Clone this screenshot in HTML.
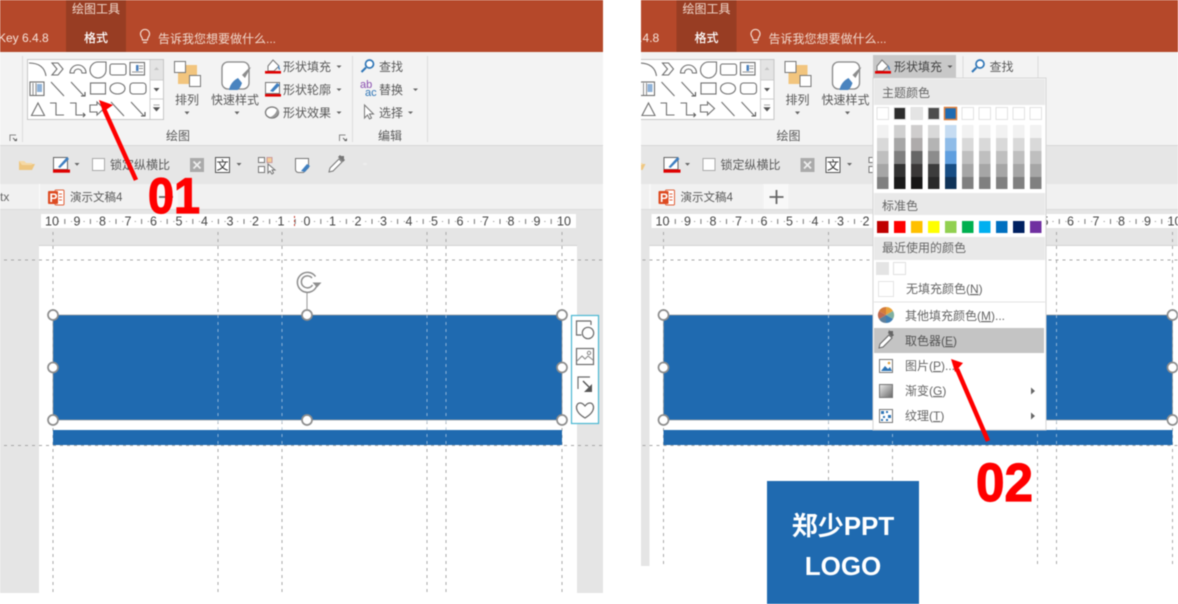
<!DOCTYPE html>
<html lang="zh">
<head>
<meta charset="utf-8">
<title>PPT</title>
<style>
html,body{margin:0;padding:0;background:#fff;width:1178px;height:604px;overflow:hidden}
svg{display:block;filter:blur(.45px)}
text{font-family:"Liberation Sans","Noto Sans CJK SC",sans-serif;font-size:12px;fill:#5a5a5a}
.c{text-anchor:middle}
.w{fill:#fff}
.p{fill:#f0d8cc}
.r{fill:#444;text-anchor:middle;font-size:12.5px}
.big{font-weight:bold;fill:#f00;stroke:#f00;stroke-width:1.2px}
.m{fill:#666;font-size:12px}
.h{fill:#666;font-size:12px}
</style>
</head>
<body>
<svg xmlns="http://www.w3.org/2000/svg" width="1178" height="604" viewBox="0 0 1178 604">
<defs>
<clipPath id="cl"><rect x="0" y="0" width="603" height="604"/></clipPath>
<clipPath id="cr"><rect x="641" y="0" width="537" height="604"/></clipPath>
<pattern id="tick" patternUnits="userSpaceOnUse" x="52" y="214" width="25.6" height="14">
<rect x="12.3" y="5" width="1" height="5" fill="#777"/>
<rect x="6" y="7" width="1" height="1" fill="#888"/>
<rect x="19" y="7" width="1" height="1" fill="#888"/>
</pattern>
<g id="chrome">
<rect x="-10" y="0" width="613" height="593" fill="#e5e5e5"/>
<rect x="-10" y="0" width="613" height="52" fill="#b5482a"/>
<rect x="66" y="0" width="60" height="52" fill="#983d23"/>
<path d="M141 36a4.500 4.500 0 1 1 8 0c-1 1.500-1.500 2-1.500 4h-5c0-2-.5-2.500-1.500-4zM143 42.500h4" fill="none" stroke="#f3dcd2" stroke-width="1.200"/>
<rect x="-10" y="52" width="613" height="94" fill="#f3f3f3"/>
<rect x="-10" y="145" width="613" height="1.500" fill="#d8d8d8"/>
<rect x="22" y="56" width="1" height="86" fill="#dcdcdc"/>
<rect x="352" y="56" width="1" height="86" fill="#dcdcdc"/>
<rect x="427" y="56" width="1" height="86" fill="#dcdcdc"/>
<rect x="-10" y="146" width="613" height="38" fill="#e6e6e6"/>
<rect x="-10" y="184" width="613" height="25" fill="#f1f1f1"/>
<rect x="-10" y="209" width="613" height="1" fill="#dcdcdc"/>
<rect x="39" y="184" width="1" height="25" fill="#fbfbfb"/>
<rect x="153" y="184" width="25" height="25" fill="#f8f8f8"/>
<path d="M166 190v14M159 197h14" stroke="#666" stroke-width="1.800"/>
<!-- gallery -->
<rect x="27.500" y="59.500" width="136" height="60" fill="#fff" stroke="#c6c6c6"/>
<rect x="150" y="60" width="13" height="20" fill="#e4e4e4"/>
<path d="M150 60v59M150 80h13M150 99h13" stroke="#cfcfcf" fill="none"/>
<path d="M154 70l2.500-3 2.500 3z" fill="#c4c4c4"/>
<path d="M153.500 88h6l-3 3.500z" fill="#555"/>
<path d="M153.500 105h6M153.500 107.500h6l-3 3.500z" fill="#555" stroke="#555" stroke-width=".6"/>
<g fill="none" stroke="#707070" stroke-width="1.100">
<path d="M29 63Q44 63 46 76"/>
<path d="M52 63h6l5 6-5 6h-6l5-6z"/>
<path d="M70 73a8 8 0 0 1 16 0h-4a4 4 0 0 0-8 0z"/>
<path d="M106 62v8a8 8 0 1 1-8-8z"/>
<rect x="110" y="64" width="16" height="11" rx="2"/>
<rect x="130" y="62.500" width="14.500" height="12.500"/>
<path d="M139 66h4M139 68.500h4M132 72h11" stroke-width=".8"/>
<rect x="30" y="82" width="14" height="13.500"/>
<path d="M33 83v12M36 83v12" stroke-width=".8"/>
<path d="M51 82l13 14"/>
<path d="M71 82l13 14"/><path d="M81 96h4v-4" stroke="#555"/>
<rect x="90.500" y="83" width="15" height="11"/>
<ellipse cx="117.500" cy="88.500" rx="7.500" ry="5.500"/>
<rect x="130" y="83" width="16" height="11" rx="3"/>
<path d="M38 103l6.500 12.500h-13z"/>
<path d="M50 103h6v12h8"/>
<path d="M70 103h6v12h8"/><path d="M83 113l2 2-2 2" stroke="#555"/>
<path d="M90 105h7v-3l7 6.500-7 6.500v-3h-7z"/>
<path d="M111 102l13 14"/>
<path d="M131 102l13 14"/><path d="M141 116h4v-4" stroke="#555"/>
</g>
<rect x="136" y="65" width="2.500" height="6" fill="#4a80bd"/>
<rect x="37" y="84" width="5" height="8" fill="#8fb2d8"/>
<!-- arrange -->
<rect x="178" y="65" width="19" height="19" fill="#f2c57e"/>
<rect x="174.500" y="61.500" width="11" height="11" fill="#fff" stroke="#777"/>
<rect x="189.500" y="75.500" width="11" height="11" fill="#fff" stroke="#777"/>
<path d="M184.500 111.500h5l-2.500 3z" fill="#666"/>
<!-- quick style -->
<rect x="222" y="62" width="27" height="27" rx="6" fill="#fff" stroke="#888" stroke-width="1.300"/>
<path d="M248 69l3-2-6 11-3-3z" fill="#8c8c8c"/>
<path d="M229 90c1-6 5-10 9-12l4 5c-1 3-3 7-5 7z" fill="#4a84bf"/>
<path d="M234.500 111.500h5l-2.500 3z" fill="#666"/>
<!-- fill/outline/effect -->
<path d="M268 66l5-6 6 6-5 5-6 0z" fill="#fff" stroke="#777"/>
<path d="M278 65c2 2 2 4 2 5-2 0-2-3-2-5z" fill="#4a84bf"/>
<rect x="265" y="71" width="16" height="2.600" fill="#e00000"/>
<rect x="265.500" y="82.500" width="14" height="11" fill="#fff" stroke="#777"/>
<path d="M270 91l7-8 3 2-7 7z" fill="#3f7fc0"/>
<rect x="265" y="94" width="16" height="2.600" fill="#e00000"/>
<ellipse cx="272" cy="112.500" rx="6.500" ry="5.500" fill="#fff" stroke="#777" stroke-width="1.300"/>
<path d="M270 117c4 1 8-1 9-6l-2-3c0 4-3 8-7 9z" fill="#999"/>
<path d="M336.500 65.500h5l-2.500 2.500zM336.500 88.500h5l-2.500 2.500zM336.500 111.500h5l-2.500 2.500z" fill="#666"/>
<!-- launchers -->
<path d="M10 141v-6h6M339.500 141v-6h6" fill="none" stroke="#888"/>
<path d="M13 138l3 3M343 138l3 3" stroke="#666"/><path d="M14 141h3v-3zM344 141h3v-3z" fill="#666"/>
<!-- find / replace / select -->
<circle cx="369.500" cy="64" r="4" fill="#fff" stroke="#2e75b6" stroke-width="1.700"/>
<path d="M366 67.500l-4.500 4.500" stroke="#2e75b6" stroke-width="2"/>
<path d="M413 88.500h5l-2.500 2.500zM408 111.500h5l-2.500 2.500z" fill="#666"/>
<path d="M364.500 105v13l3-3 2 4 2-1-2-4h4z" fill="#fff" stroke="#777"/>
<!-- toolbar -->
<path d="M19 170v-9h5l2 2h6v1h3l-3 6z" fill="#eec680"/>
<path d="M19 161h5l2 2h6v2H22z" fill="#f5d9a5"/>
<rect x="53.500" y="157.500" width="14" height="12" fill="#fff" stroke="#666"/>
<path d="M58 167l9-10 2 2-9 9z" fill="#3f7fc0"/>
<rect x="53" y="169.500" width="17" height="3.200" fill="#e00000"/>
<path d="M74.500 163h5l-2.500 2.800z" fill="#666"/>
<rect x="92.500" y="158.500" width="12" height="12" fill="#fff" stroke="#aaa"/>
<rect x="190" y="158" width="14" height="14" fill="#aaa"/>
<path d="M193.500 161.500l7 7M200.500 161.500l-7 7" stroke="#eee" stroke-width="1.800"/>
<rect x="215.500" y="157.500" width="14" height="15" fill="#fff" stroke="#555"/>
<path d="M236.500 163h5l-2.500 2.800z" fill="#666"/>
<rect x="258.500" y="157.500" width="6" height="5" fill="#fff" stroke="#777"/>
<rect x="258.500" y="166.500" width="6" height="6" fill="#fff" stroke="#777"/>
<rect x="267" y="157.500" width="5" height="5" fill="#f4cf98" stroke="#c99"/>
<path d="M268 164v9l2-2 2 3 1.500-1-1.500-3h3z" fill="#fff" stroke="#777"/>
<path d="M295.500 158.500h13v9l-5 5h-5a3 3 0 0 1-3-3z" fill="#fff" stroke="#777"/>
<path d="M301 171l6-7 3 2-5 6z" fill="#3f7fc0"/>
<path d="M329 172l1-4 9-9 3 3-9 9z" fill="#fff" stroke="#777"/>
<path d="M338 157l5 5 2-2-1-1 0-3-3 0-1-1z" fill="#777"/>
<rect x="363" y="163" width="4" height="2" fill="#ededed"/>
<!-- tab icon -->
<rect x="55" y="190" width="9" height="15" rx="1" fill="#fff" stroke="#e0603a"/>
<path d="M59 194h3M59 197h3M59 200h3" stroke="#e0603a"/>
<rect x="48" y="191" width="10" height="13" rx="1" fill="#dd4b22"/>
<!-- ruler -->
<rect x="41" y="214" width="535" height="14" fill="#fff"/>
<rect x="52" y="214" width="512" height="14" fill="url(#tick)"/>
<!-- slide -->
<rect x="39" y="245" width="538" height="348" fill="#fff"/>
<rect x="39" y="245" width="538" height="1" fill="#d2d2d2"/>
<g fill="none" stroke="#a8a8a8" stroke-width="1" stroke-dasharray="3 4">
<path d="M-10 260H603M-10 445.500H603"/>
<path d="M53 232V593M218 232V593M282 232V593M427 232V593M446 232V593M562 232V593"/>
</g>
<rect x="53" y="315" width="509" height="105" fill="#1f6ab0"/>
<rect x="53" y="430" width="509" height="15" fill="#1f6ab0"/>
<g fill="none" stroke="#bcd3e8" stroke-width="1" stroke-dasharray="3 4" opacity=".7">
<path d="M218 315V445M282 315V445M427 315V445M446 315V445"/>
</g>
<path d="M53 315H562M53 420H562M53 315V420M562 315V420" fill="none" stroke="#9a9a9a" stroke-width="1" opacity=".7"/>
</g>
<g id="handles" fill="#fff" stroke="#8d8d8d" stroke-width="1.700">
<circle cx="53" cy="315" r="5"/><circle cx="53" cy="367.500" r="5"/><circle cx="53" cy="420" r="5"/>
<circle cx="562" cy="315" r="5"/><circle cx="562" cy="367.500" r="5"/><circle cx="562" cy="420" r="5"/>
<circle cx="307" cy="315" r="5"/><circle cx="307" cy="420" r="5"/>
</g>
</defs>

<!-- LEFT PANEL -->
<g clip-path="url(#cl)">
<use href="#chrome"/>
<use href="#handles"/>
<text x="72" y="13" class="p" style="font-size:12px">绘图工具</text>
<text x="96" y="42" class="w c" style="font-weight:500">格式</text>
<text x="-2" y="42" class="w" style="font-size:12px;fill:#f6e3da">Key 6.4.8</text>
<text x="158" y="43" class="p" style="font-size:12px">告诉我您想要做什么...</text>
<text x="187" y="104" class="c">排列</text>
<text x="235" y="104" class="c">快速样式</text>
<text x="283" y="71">形状填充</text>
<text x="283" y="94">形状轮廓</text>
<text x="283" y="117">形状效果</text>
<text x="379" y="71">查找</text>
<text x="379" y="94">替换</text>
<text x="379" y="117">选择</text>
<text x="360" y="88" style="font-size:11px;fill:#8a4fb0">ab</text>
<text x="365" y="96" style="font-size:11px;fill:#2e75b6">ac</text>
<text x="178" y="140" class="c">绘图</text>
<text x="390" y="140" class="c">编辑</text>
<text x="110" y="169" style="font-size:12px">锁定纵横比</text>
<text x="222.500" y="169.500" class="c" style="fill:#333;font-size:12px">文</text>
<text x="0" y="201" style="fill:#666">tx</text>
<text x="49.500" y="202" style="font-size:12px;font-weight:bold;fill:#fff">P</text>
<text x="70" y="201" style="font-size:11.500px">演示文稿4</text>
<text x="52" y="225.500" class="r">10</text><text x="77" y="225.500" class="r">9</text><text x="102.500" y="225.500" class="r">8</text><text x="128" y="225.500" class="r">7</text><text x="153.500" y="225.500" class="r">6</text><text x="179" y="225.500" class="r">5</text><text x="204.500" y="225.500" class="r">4</text><text x="230" y="225.500" class="r">3</text><text x="255.500" y="225.500" class="r">2</text><text x="281" y="225.500" class="r">1</text><text x="307" y="225.500" class="r">0</text><text x="332.500" y="225.500" class="r">1</text><text x="358" y="225.500" class="r">2</text><text x="383.500" y="225.500" class="r">3</text><text x="409" y="225.500" class="r">4</text><text x="434.500" y="225.500" class="r">5</text><text x="460" y="225.500" class="r">6</text><text x="485.500" y="225.500" class="r">7</text><text x="511" y="225.500" class="r">8</text><text x="537" y="225.500" class="r">9</text><text x="564" y="225.500" class="r">10</text>
<path d="M294.500 216V228" stroke="#c0392b" stroke-dasharray="2 2"/>
<!-- rotate handle -->
<path d="M307 292V311" stroke="#999" stroke-width="1"/>
<path d="M315.500 276.500a10 10 0 1 0 1 10" fill="none" stroke="#8d8d8d" stroke-width="1.500"/>
<path d="M312 278a6 6 0 1 0 .5 7" fill="none" stroke="#8d8d8d" stroke-width="1.500"/>
<path d="M312.500 282.500h9l-4.500 5z" fill="#8d8d8d"/>
<!-- float toolbar -->
<rect x="571.500" y="315.500" width="27" height="108" fill="#fff" stroke="#4ab7d2" stroke-width="1.200"/>
<path d="M591 321h-14.500v14h5" fill="none" stroke="#6b6b6b" stroke-width="1.200"/>
<path d="M591 321v4" stroke="#6b6b6b" stroke-width="1.200"/>
<circle cx="588" cy="333" r="5.700" fill="#fff" stroke="#6b6b6b" stroke-width="1.200"/>
<rect x="576.500" y="348.500" width="17" height="16" fill="#fff" stroke="#6b6b6b" stroke-width="1.200"/>
<path d="M577 361l5-5 3 3 3-3 5 4" fill="none" stroke="#888"/>
<circle cx="589" cy="353" r="1.700" fill="none" stroke="#888"/>
<path d="M590 377h-12v12" fill="none" stroke="#6b6b6b" stroke-width="1.200"/>
<path d="M583 381l6 6" stroke="#555" stroke-width="1.400"/>
<path d="M592 384v8h-8z" fill="#555"/>
<path d="M585 418c-12-7-9-15-5-15 3 0 4 2 5 3 1-1 2-3 5-3 4 0 7 8-5 15z" fill="#fff" stroke="#6b6b6b" stroke-width="1.300"/>
<!-- red arrow -->
<path d="M136 180L104 109" stroke="#f00" stroke-width="4.500" fill="none"/>
<path d="M99 100l14 5-10 7z" fill="#f00"/>
<text x="148" y="213" class="big" style="font-size:50px" textLength="52" lengthAdjust="spacingAndGlyphs">01</text>
</g>

<!-- RIGHT PANEL -->
<g clip-path="url(#cr)">
<g transform="translate(610.500,0)">
<use href="#chrome"/>
<use href="#handles"/>
<text x="72" y="13" class="p" style="font-size:12px">绘图工具</text>
<text x="96" y="42" class="w c" style="font-weight:500">格式</text>
<text x="-2" y="42" class="w" style="font-size:12px;fill:#f6e3da">Key 6.4.8</text>
<text x="158" y="43" class="p" style="font-size:12px">告诉我您想要做什么...</text>
<text x="187" y="104" class="c">排列</text>
<text x="235" y="104" class="c">快速样式</text>
<text x="379" y="71">查找</text>
<text x="178" y="140" class="c">绘图</text>
<text x="110" y="169" style="font-size:12px">锁定纵横比</text>
<text x="222.500" y="169.500" class="c" style="fill:#333;font-size:12px">文</text>
<text x="49.500" y="202" style="font-size:12px;font-weight:bold;fill:#fff">P</text>
<text x="70" y="201" style="font-size:11.500px">演示文稿4</text>
<text x="52" y="225.500" class="r">10</text><text x="77" y="225.500" class="r">9</text><text x="102.500" y="225.500" class="r">8</text><text x="128" y="225.500" class="r">7</text><text x="153.500" y="225.500" class="r">6</text><text x="179" y="225.500" class="r">5</text><text x="204.500" y="225.500" class="r">4</text><text x="230" y="225.500" class="r">3</text><text x="255.500" y="225.500" class="r">2</text><text x="281" y="225.500" class="r">1</text><text x="307" y="225.500" class="r">0</text><text x="332.500" y="225.500" class="r">1</text><text x="358" y="225.500" class="r">2</text><text x="383.500" y="225.500" class="r">3</text><text x="409" y="225.500" class="r">4</text><text x="434.500" y="225.500" class="r">5</text><text x="460" y="225.500" class="r">6</text><text x="485.500" y="225.500" class="r">7</text><text x="511" y="225.500" class="r">8</text><text x="537" y="225.500" class="r">9</text><text x="564" y="225.500" class="r">10</text>
</g>
</g>

<!-- lower white cut of right panel -->
<rect x="641" y="566" width="537" height="38" fill="#fff"/>

<!-- highlighted button -->
<rect x="873" y="55" width="83" height="24" fill="#c8c8c8"/>
<path d="M877 66l5-6 6 6-5 5-6 0z" fill="#fff" stroke="#777"/>
<path d="M888 65c2 2 2 4 2 5-2 0-2-3-2-5z" fill="#4a84bf"/>
<rect x="875" y="71" width="16" height="2.600" fill="#e00000"/>
<text x="894" y="71" style="fill:#444">形状填充</text>
<path d="M947.500 65.500h5l-2.500 2.500z" fill="#555"/>

<!-- menu -->
<rect x="873" y="78" width="173" height="352" fill="#fff" stroke="#d4d4d4"/>
<rect x="874" y="79" width="171" height="26" fill="#e9e9e9"/>
<text x="882" y="97" class="h">主题颜色</text>
<g stroke="#e2e2e2">
<rect x="877" y="107.500" width="11.500" height="12" fill="#fff"/>
<rect x="894" y="107.500" width="11.500" height="12" fill="#2d2d2d"/>
<rect x="911" y="107.500" width="11.500" height="12" fill="#e4e4e4"/>
<rect x="928" y="107.500" width="11.500" height="12" fill="#4d4d4d"/>
<rect x="962" y="107.500" width="11.500" height="12" fill="#fff"/>
<rect x="979" y="107.500" width="11.500" height="12" fill="#fff"/>
<rect x="996" y="107.500" width="11.500" height="12" fill="#fff"/>
<rect x="1013" y="107.500" width="11.500" height="12" fill="#fff"/>
<rect x="1030" y="107.500" width="11.500" height="12" fill="#fff"/>
</g>
<rect x="944.500" y="107.500" width="12" height="12" fill="#1f6ab0" stroke="#e0803c" stroke-width="1.500"/>
<!-- shade columns -->
<g>
<rect x="877" y="125" width="11.500" height="13" fill="#f2f2f2"/><rect x="877" y="138" width="11.500" height="13" fill="#d9d9d9"/><rect x="877" y="151" width="11.500" height="13" fill="#bfbfbf"/><rect x="877" y="164" width="11.500" height="13" fill="#a6a6a6"/><rect x="877" y="177" width="11.500" height="12" fill="#808080"/>
<rect x="894" y="125" width="11.500" height="13" fill="#d0d0d0"/><rect x="894" y="138" width="11.500" height="13" fill="#a6a6a6"/><rect x="894" y="151" width="11.500" height="13" fill="#7f7f7f"/><rect x="894" y="164" width="11.500" height="13" fill="#333"/><rect x="894" y="177" width="11.500" height="12" fill="#1a1a1a"/>
<rect x="911" y="125" width="11.500" height="13" fill="#cfcdcd"/><rect x="911" y="138" width="11.500" height="13" fill="#aeabab"/><rect x="911" y="151" width="11.500" height="13" fill="#666"/><rect x="911" y="164" width="11.500" height="13" fill="#3a3838"/><rect x="911" y="177" width="11.500" height="12" fill="#171616"/>
<rect x="928" y="125" width="11.500" height="13" fill="#d9d9d9"/><rect x="928" y="138" width="11.500" height="13" fill="#b4b4b4"/><rect x="928" y="151" width="11.500" height="13" fill="#8c8c8c"/><rect x="928" y="164" width="11.500" height="13" fill="#3c3c3c"/><rect x="928" y="177" width="11.500" height="12" fill="#282828"/>
<rect x="945" y="125" width="11.500" height="13" fill="#c6dcf2"/><rect x="945" y="138" width="11.500" height="13" fill="#8fbce8"/><rect x="945" y="151" width="11.500" height="13" fill="#5f9fdf"/><rect x="945" y="164" width="11.500" height="13" fill="#174e85"/><rect x="945" y="177" width="11.500" height="12" fill="#0f3358"/>
<rect x="962" y="125" width="11.500" height="13" fill="#f2f2f2"/><rect x="962" y="138" width="11.500" height="13" fill="#d9d9d9"/><rect x="962" y="151" width="11.500" height="13" fill="#bfbfbf"/><rect x="962" y="164" width="11.500" height="13" fill="#a6a6a6"/><rect x="962" y="177" width="11.500" height="12" fill="#808080"/>
<rect x="979" y="125" width="11.500" height="13" fill="#f2f2f2"/><rect x="979" y="138" width="11.500" height="13" fill="#d9d9d9"/><rect x="979" y="151" width="11.500" height="13" fill="#bfbfbf"/><rect x="979" y="164" width="11.500" height="13" fill="#a6a6a6"/><rect x="979" y="177" width="11.500" height="12" fill="#808080"/>
<rect x="996" y="125" width="11.500" height="13" fill="#f2f2f2"/><rect x="996" y="138" width="11.500" height="13" fill="#d9d9d9"/><rect x="996" y="151" width="11.500" height="13" fill="#bfbfbf"/><rect x="996" y="164" width="11.500" height="13" fill="#a6a6a6"/><rect x="996" y="177" width="11.500" height="12" fill="#808080"/>
<rect x="1013" y="125" width="11.500" height="13" fill="#f2f2f2"/><rect x="1013" y="138" width="11.500" height="13" fill="#d9d9d9"/><rect x="1013" y="151" width="11.500" height="13" fill="#bfbfbf"/><rect x="1013" y="164" width="11.500" height="13" fill="#a6a6a6"/><rect x="1013" y="177" width="11.500" height="12" fill="#808080"/>
<rect x="1030" y="125" width="11.500" height="13" fill="#f2f2f2"/><rect x="1030" y="138" width="11.500" height="13" fill="#d9d9d9"/><rect x="1030" y="151" width="11.500" height="13" fill="#bfbfbf"/><rect x="1030" y="164" width="11.500" height="13" fill="#a6a6a6"/><rect x="1030" y="177" width="11.500" height="12" fill="#808080"/>
</g>
<rect x="874" y="193" width="171" height="22" fill="#e9e9e9"/>
<text x="882" y="210" class="h">标准色</text>
<rect x="877" y="221" width="11.500" height="12" fill="#c00000"/><rect x="894" y="221" width="11.500" height="12" fill="#f00"/><rect x="911" y="221" width="11.500" height="12" fill="#ffc000"/><rect x="928" y="221" width="11.500" height="12" fill="#ff0"/><rect x="945" y="221" width="11.500" height="12" fill="#92d050"/><rect x="962" y="221" width="11.500" height="12" fill="#00b050"/><rect x="979" y="221" width="11.500" height="12" fill="#00b0f0"/><rect x="996" y="221" width="11.500" height="12" fill="#0070c0"/><rect x="1013" y="221" width="11.500" height="12" fill="#002060"/><rect x="1030" y="221" width="11.500" height="12" fill="#7030a0"/>
<rect x="874" y="237" width="171" height="23" fill="#e9e9e9"/>
<text x="882" y="252" class="h">最近使用的颜色</text>
<rect x="876" y="262" width="13" height="13" fill="#e4e4e4"/>
<rect x="893.500" y="262.500" width="12" height="12" fill="#fff" stroke="#e0e0e0"/>
<rect x="878.500" y="281.500" width="15" height="15" fill="#fff" stroke="#e4e4e4"/>
<text x="906" y="293" class="m">无填充颜色(<tspan text-decoration="underline">N</tspan>)</text>
<rect x="874" y="301.500" width="171" height="1" fill="#e2e2e2"/>
<path d="M886 315V307a8 8 0 0 1 7 4z" fill="#e8a33d"/><path d="M886 315l7-4a8 8 0 0 1 0 8z" fill="#7fb0a0"/><path d="M886 315l7 4a8 8 0 0 1-7 4z" fill="#3f7fb5"/><path d="M886 315v8a8 8 0 0 1-7-4z" fill="#5e7f9b"/><path d="M886 315l-7 4a8 8 0 0 1 0-8z" fill="#c06a50"/><path d="M886 315l-7-4a8 8 0 0 1 7-4z" fill="#d47b3a"/>
<text x="905" y="320" class="m">其他填充颜色(<tspan text-decoration="underline">M</tspan>)...</text>
<rect x="874" y="328" width="170" height="25" fill="#c4c4c4"/>
<path d="M879 348l1-4 9-9 3 3-9 9z" fill="#fff" stroke="#666"/>
<path d="M888 333l4 4 2-2-1-1 0-3-3 0-1-1z" fill="#666"/>
<text x="905" y="345" class="m" style="fill:#555">取色器(<tspan text-decoration="underline">E</tspan>)</text>
<rect x="879.500" y="359.500" width="13" height="13" fill="#fff" stroke="#777"/>
<path d="M881 371l4-5 3 3 2-2 2 4z" fill="#2e75b6"/>
<circle cx="889" cy="363" r="1.300" fill="#e0a040"/>
<text x="905" y="370" class="m">图片(<tspan text-decoration="underline">P</tspan>)...</text>
<defs><linearGradient id="gr" x1="0" y1="0" x2="1" y2="1"><stop offset="0" stop-color="#eee"/><stop offset="1" stop-color="#666"/></linearGradient></defs>
<rect x="879.500" y="384.500" width="13" height="13" fill="url(#gr)" stroke="#777"/>
<text x="905" y="395" class="m">渐变(<tspan text-decoration="underline">G</tspan>)</text>
<path d="M1031 387.500l4 3.500-4 3.500z" fill="#666"/>
<rect x="879.500" y="409.500" width="13" height="13" fill="#fff" stroke="#777"/>
<path d="M881 411h3v3h-3zM886 411h2v2h-2zM883 416h2v2h-2zM888 415h3v3h-3zM881 419h2v2h-2zM886 419h2v2h-2z" fill="#2e75b6"/>
<text x="905" y="420" class="m">纹理(<tspan text-decoration="underline">T</tspan>)</text>
<path d="M1031 412.500l4 3.500-4 3.500z" fill="#666"/>

<!-- red arrow 2 -->
<path d="M988 441L957 369" stroke="#f00" stroke-width="4.500" fill="none"/>
<path d="M951 359l12 4-8 9z" fill="#f00"/>
<text x="976" y="501" class="big" style="font-size:54px" textLength="57" lengthAdjust="spacingAndGlyphs">02</text>

<!-- logo -->
<rect x="767" y="481" width="152" height="123" fill="#1f6ab0"/>
<text x="843" y="535" class="w c" style="font-size:26px;font-weight:bold">郑少PPT</text>
<text x="843" y="575" class="w c" style="font-size:26px;font-weight:bold">LOGO</text>
</svg>
</body>
</html>
